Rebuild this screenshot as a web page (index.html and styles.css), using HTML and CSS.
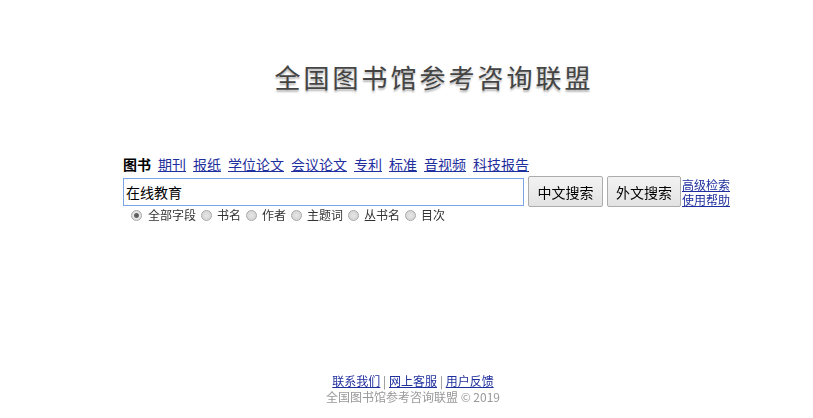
FILE: index.html
```html
<!DOCTYPE html>
<html lang="zh-CN">
<head>
    <meta charset="UTF-8">
    <title>全国图书馆参考咨询联盟</title>
    <link rel="stylesheet" href="styles.css">
</head>
<body>
    <div class="logo">全国图书馆参考咨询联盟</div>

    <div class="search">
        <div class="tabs">
            <span class="current">图书</span>
            <a href="#">期刊</a>
            <a href="#">报纸</a>
            <a href="#">学位论文</a>
            <a href="#">会议论文</a>
            <a href="#">专利</a>
            <a href="#">标准</a>
            <a href="#">音视频</a>
            <a href="#">科技报告</a>
        </div>
        <form class="form">
            <input class="keyword" type="text" value="在线教育" autofocus>
            <button type="button" class="btn">中文搜索</button>
            <button type="button" class="btn">外文搜索</button>
            <div class="side-links">
                <a href="#">高级检索</a>
                <a href="#">使用帮助</a>
            </div>
        </form>
        <div class="fields">
            <label class="first"><input type="radio" name="field" checked>全部字段</label>
            <label><input type="radio" name="field">书名</label>
            <label><input type="radio" name="field">作者</label>
            <label><input type="radio" name="field">主题词</label>
            <label><input type="radio" name="field">丛书名</label>
            <label><input type="radio" name="field">目次</label>
        </div>
    </div>

    <div class="footer">
        <div class="footer-links">
            <a href="#">联系我们</a> | <a href="#">网上客服</a> | <a href="#">用户反馈</a>
        </div>
        <div class="copy">全国图书馆参考咨询联盟 &copy; 2019</div>
    </div>
</body>
</html>
```

FILE: styles.css
```css
body {
    margin: 0;
    font-family: "Noto Sans CJK SC", "Liberation Sans", sans-serif;
    background-color: #ffffff;
    color: #000;
}

a {
    color: #1f2f9e;
}

.logo {
    padding: 60px 0 0 55px;
    text-align: center;
    font-size: 26px;
    line-height: 34px;
    letter-spacing: 3px;
    color: #444;
    text-shadow: 0 2px 2px rgba(0, 0, 0, 0.3);
}

.search {
    width: 567px;
    margin: 60px auto 0;
}

.tabs {
    display: flex;
    gap: 7px;
    font-size: 14px;
    line-height: 20px;
}

.tabs .current {
    font-weight: bold;
}

.form {
    display: flex;
    align-items: center;
    width: max-content;
    margin: 2px 0 0;
}

.keyword {
    box-sizing: border-box;
    width: 401px;
    height: 28px;
    margin: 0 4px 0 0;
    padding: 0 2px;
    border: 1px solid #7ba6e6;
    outline: none;
    font-family: inherit;
    font-size: 14px;
    color: #000;
}

.btn {
    box-sizing: border-box;
    width: 75px;
    height: 31px;
    margin: 0 4px 0 0;
    padding: 0;
    border: 1px solid #acacac;
    border-radius: 2px;
    background: linear-gradient(#f2f2f2, #e3e3e3);
    font-family: inherit;
    font-size: 14px;
    color: #000;
}

.btn + .btn {
    width: 74px;
    margin-right: 1px;
}

.side-links {
    display: flex;
    flex-direction: column;
    font-size: 12px;
    line-height: 15px;
}

.fields {
    display: flex;
    font-size: 12px;
    line-height: 16px;
    color: #333;
}

.fields label {
    display: flex;
    align-items: center;
}

.fields input {
    appearance: none;
    box-sizing: border-box;
    width: 11px;
    height: 11px;
    margin: 0 5px;
    border: 1px solid #a8a8a8;
    border-radius: 50%;
    background: radial-gradient(#e6e6e6, #d0d0d0);
}

.fields .first input {
    margin: 0 6px 0 8px;
}

.fields input:checked {
    background: radial-gradient(circle, #555 0, #666 2px, #e8e8e8 3px, #d4d4d4 6px);
}

.footer {
    margin-top: 150px;
    padding-left: 13px;
    text-align: center;
    font-size: 12px;
    line-height: 16px;
}

.footer-links {
    color: #888;
}

.copy {
    color: #999;
}
```
